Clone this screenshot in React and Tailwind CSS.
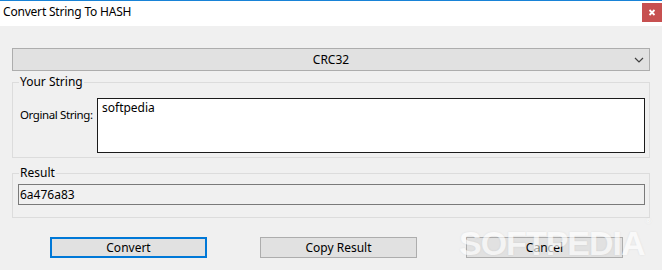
import React from "react";

function GroupBox({ label, className = "", children }) {
  return (
    <div className={"relative border border-[#dcdcdc] " + className}>
      <span className="absolute left-[6px] top-[-9px] bg-[#f0f0f0] px-[1px] leading-[16px] text-[12px] text-black whitespace-nowrap">
        {label}
      </span>
      {children}
    </div>
  );
}

function Btn({ children, focused, className = "" }) {
  return (
    <button
      className={
        "shrink-0 w-[157px] h-[21px] bg-[#e1e1e1] text-[12px] leading-none text-black flex items-center justify-center whitespace-nowrap " +
        (focused ? "border-2 border-[#0078d7] " : "border border-[#adadad] ") +
        className
      }
    >
      {children}
    </button>
  );
}

export default function App() {
  return (
    <div
      className="w-[662px] h-[270px] bg-[#f0f0f0] flex flex-col overflow-hidden relative"
      style={{ fontFamily: '"Noto Sans", "Open Sans", sans-serif' }}
    >
      <div className="h-[1px] bg-[#1883d7]" />
      <div className="h-[25px] bg-white relative">
        <span className="block pl-[3px] pt-[3px] text-[12px] leading-[16px] text-black tracking-[-0.2px] whitespace-nowrap">
          Convert String To HASH
        </span>
        <svg
          className="absolute right-0 top-[2px] block"
          width="20"
          height="19"
          viewBox="0 0 20 19"
        >
          <rect x="0" y="0" width="20" height="19" fill="#c75050" />
          <path d="M7.5 7L12.5 12M12.5 7L7.5 12" stroke="#ffffff" strokeWidth="1.8" fill="none" />
        </svg>
      </div>

      <div className="flex flex-col pl-[12px] pr-[12px] pt-[22px]">
        <div className="h-[23px] w-[638px] border border-[#adadad] bg-[#e1e1e1] relative flex items-center justify-center">
          <span className="text-[12px] leading-none text-black">CRC32</span>
          <svg className="absolute right-[5px] top-[8px]" width="10" height="6" viewBox="0 0 10 6">
            <path d="M1 1L5 5L9 1" stroke="#404040" strokeWidth="1.2" fill="none" />
          </svg>
        </div>

        <GroupBox label="Your String" className="mt-[11px] w-[638px] h-[76px]">
          <div className="flex items-start pl-[7px] pt-[15px]">
            <span className="shrink-0 w-[77px] pt-[9px] text-[11.5px] leading-[16px] text-black whitespace-nowrap tracking-[-0.4px]">
              Orginal String:
            </span>
            <div className="w-[548px] h-[55px] bg-white border border-[#1b1b1b] pl-[4px] pt-[1px] text-[12px] leading-[16px] text-black">
              softpedia
            </div>
          </div>
        </GroupBox>

        <GroupBox label="Result" className="mt-[15px] w-[638px] h-[45px]">
          <div className="pl-[5px] pt-[10px]">
            <div className="w-[627px] h-[21px] border border-[#7a7a7a] bg-[#f0f0f0] flex items-center pl-[1px] text-[12px] text-black">
              6a476a83
            </div>
          </div>
        </GroupBox>

        <div className="flex mt-[19px] pl-[38px]">
          <Btn focused>Convert</Btn>
          <Btn className="ml-[53px]">Copy Result</Btn>
          <Btn className="ml-[49px]">Cancel</Btn>
        </div>
      </div>

      <div
        className="absolute left-[459px] top-[226px] text-[34px] font-bold leading-none text-white tracking-[-1px] pointer-events-none whitespace-nowrap"
        style={{
          fontFamily: '"Liberation Sans", sans-serif',
          opacity: 0.65,
          textShadow: "0 0 2px rgba(0,0,0,0.12)",
        }}
      >
        SOFTPEDIA
        <sup className="text-[8px] align-top ml-[1px]">®</sup>
      </div>
    </div>
  );
}
